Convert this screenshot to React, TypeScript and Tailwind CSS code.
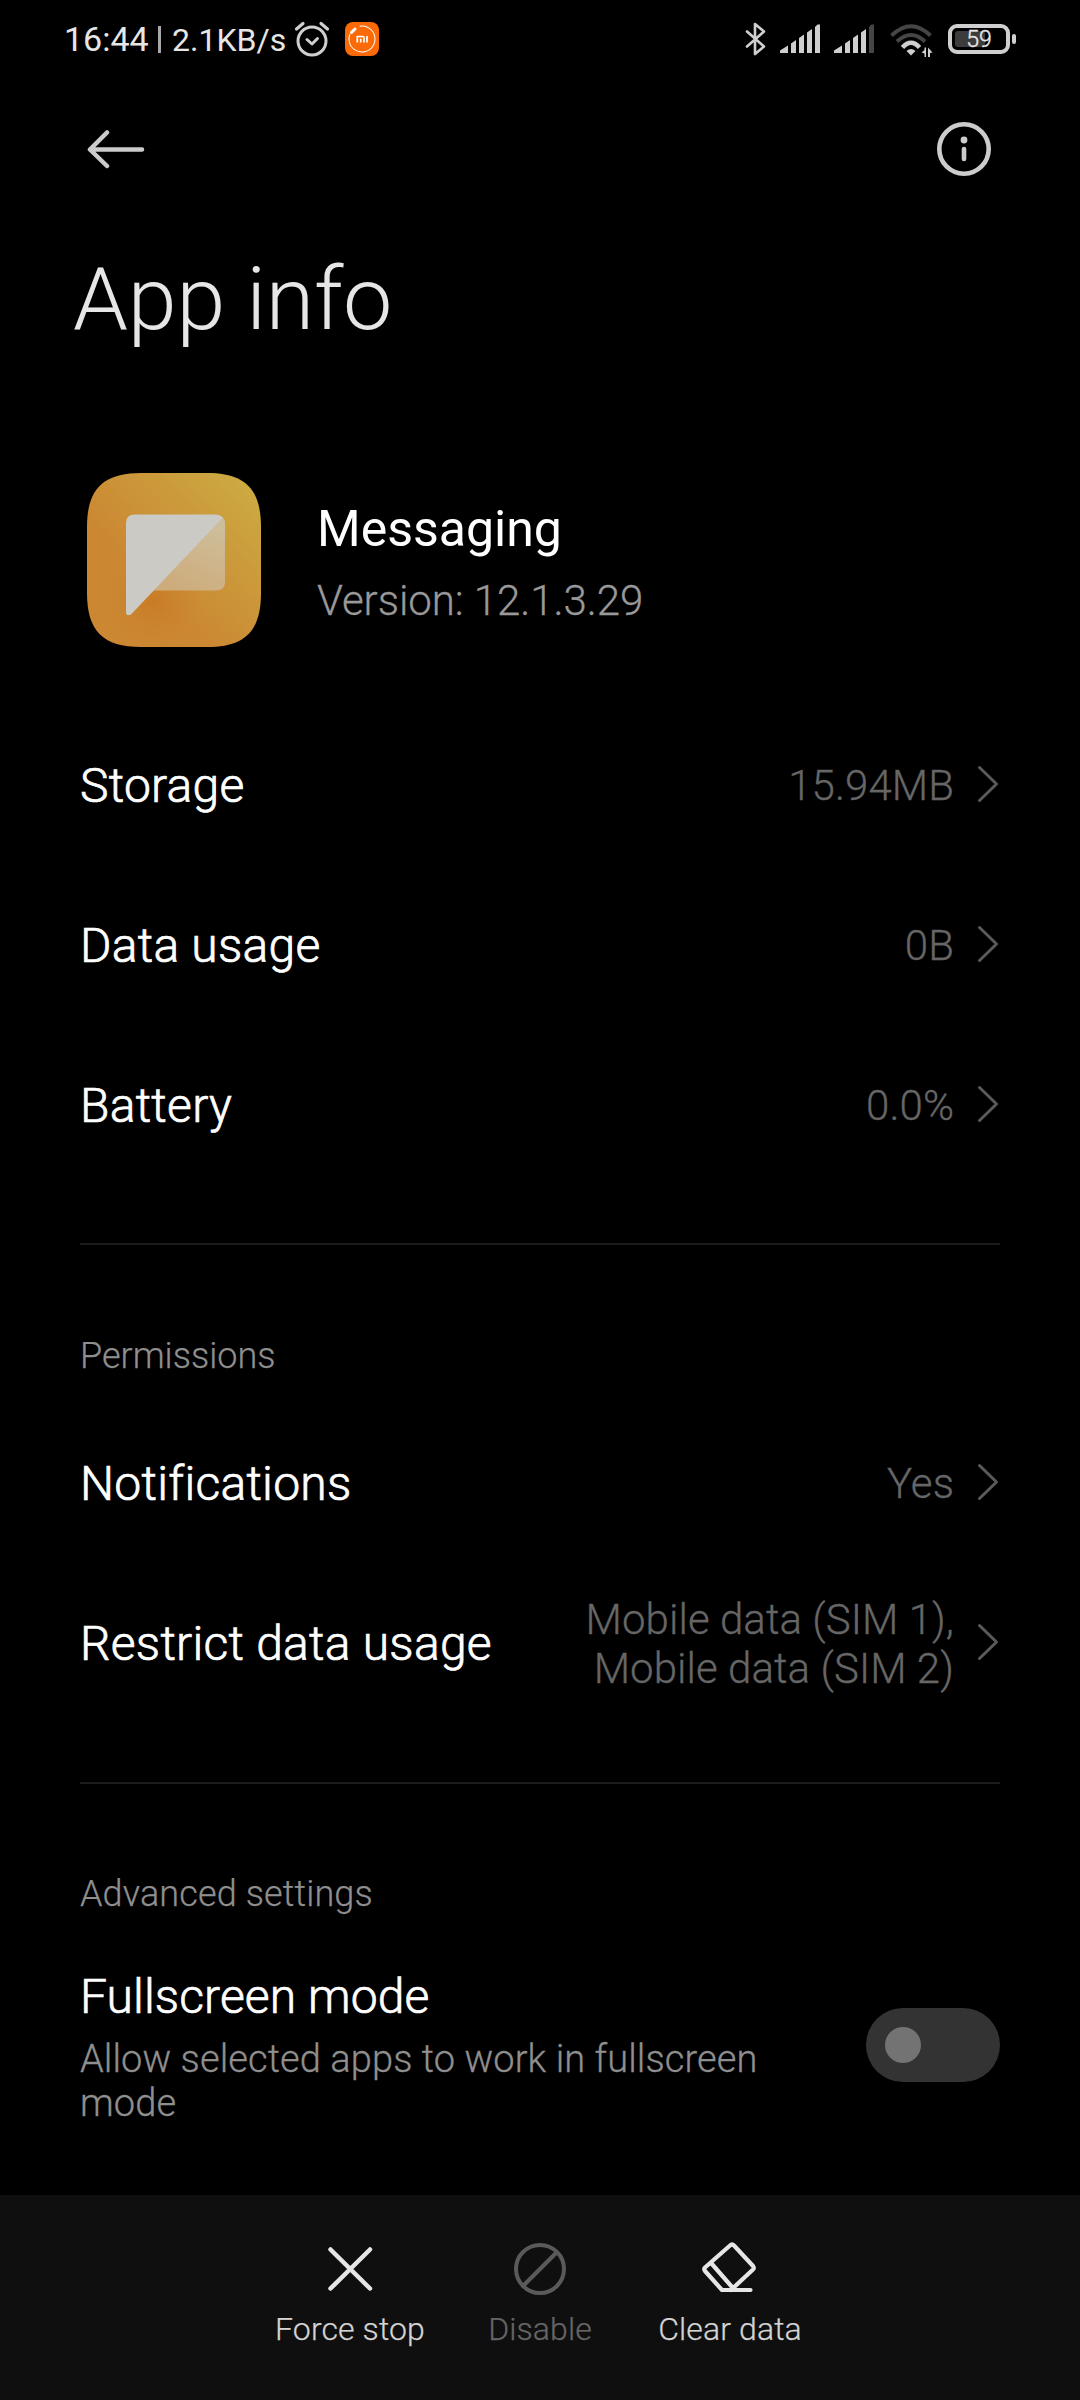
import type { ReactNode } from 'react'

interface RowProps {
  label: string
  value: ReactNode
}

function Chevron() {
  return (
    <svg width="24" height="40" viewBox="0 0 24 40" fill="none" className="shrink-0">
      <path d="M3.500 3.500 20.500 20 3.500 36.500" stroke="#5a5a5a" strokeWidth="3" strokeLinecap="round" strokeLinejoin="round" />
    </svg>
  )
}

// Light weight thickened by a hairline, halfway between Roboto Light and Regular
function Row({ label, value }: RowProps) {
  return (
    <div className="flex h-40 items-center">
      <span className="pt-[3px] text-[48px] font-light leading-none tracking-[0.25px] [-webkit-text-stroke:0.7px_currentColor]">{label}</span>
      <span className="ml-auto mr-[22px] pt-[3px] text-right text-[42px] font-light leading-[49px] tracking-[0.06px] text-[#666666] [-webkit-text-stroke:0.3px_currentColor]">{value}</span>
      <Chevron />
    </div>
  )
}

function AlarmIcon() {
  return (
    <svg width="36" height="36" viewBox="0 0 36 36" fill="none" stroke="#cfcfcf" strokeLinecap="round" strokeLinejoin="round">
      <circle cx="18" cy="20" r="14" strokeWidth="3" />
      <path d="M13 18.500 18 23 23.500 17.500" strokeWidth="3" />
      <path d="M2.500 8 9 2.500M33.500 8 27 2.500" strokeWidth="3.200" />
    </svg>
  )
}

function MiIcon() {
  return (
    <svg width="34" height="34" viewBox="0 0 34 34" fill="none">
      <rect width="34" height="34" rx="8" fill="#fb6a07" />
      <circle cx="17" cy="17" r="13" stroke="#fff" strokeWidth="1" strokeDasharray="68 13.700" transform="rotate(-100 17 17)" />
      <path d="M6.500 10.500 10 7" stroke="#fff" strokeWidth="3" strokeLinecap="round" />
      <path d="M12.300 20.500v-6h5.200q1.500 0 1.500 1.500v4.500M15.700 16.800v3.700M22 14v6.500" stroke="#fff" strokeWidth="1.700" />
    </svg>
  )
}

function BluetoothIcon() {
  return (
    <svg width="22" height="34" viewBox="0 0 22 34" fill="none">
      <path d="M2 9.500 19 24.500 10 32V2l9 7.500L2 24.500" stroke="#cfcfcf" strokeWidth="2.600" strokeLinecap="round" strokeLinejoin="round" />
    </svg>
  )
}

function SignalIcon({ weak = false }: { weak?: boolean }) {
  return (
    <svg width="40" height="30" viewBox="0 0 40 30" fill="#cfcfcf">
      <path d="M0 26.500 8 21.500V29H0ZM11 19.500 16 16v13h-5ZM19 14l5-3.500V29h-5ZM27 8.500 32 5v24h-5Z" />
      <path d="M35 3 37.500 0.500H40V29h-5Z" fill={weak ? '#454545' : '#cfcfcf'} />
    </svg>
  )
}

function WifiIcon() {
  return (
    <svg width="43" height="34" viewBox="0 0 43 34" fill="none">
      <path d="M1.500 11.500Q21 -7 40.500 11.500" stroke="#454545" strokeWidth="4" />
      <path d="M7 17.500Q21 4.500 35 17.500" stroke="#454545" strokeWidth="4" />
      <path d="M12.500 23.500Q21 14 29.500 23.500" stroke="#cfcfcf" strokeWidth="4.500" />
      <path d="M16.500 27Q21 23 25.500 27L21 31.500Z" fill="#cfcfcf" />
      <path d="M36 23.500V33H34.500V29.500L31.500 28.500 34.500 26V23.500ZM38 33V23.500L42.500 28.500 40 29V33Z" fill="#cfcfcf" />
    </svg>
  )
}

function Battery() {
  return (
    <div className="flex items-center gap-[2px]">
      <div className="relative flex h-[30px] w-[62px] items-center justify-center rounded-[9px] border-4 border-[#cfcfcf]">
        <div className="absolute left-[3px] top-[3px] h-4 w-[30px] rounded-[3px] bg-[#3c3c3c]" />
        <span className="relative pt-px text-[23px] font-light leading-none text-[#e6e6e6] [-webkit-text-stroke:0.4px_currentColor]">59</span>
      </div>
      <div className="h-[10px] w-1 rounded-full bg-[#cfcfcf]" />
    </div>
  )
}

function StatusBar() {
  return (
    <div className="flex h-[78px] items-center px-16">
      <span className="w-[85px] whitespace-nowrap text-[34px] leading-none text-[#e6e6e6]">16:44</span>
      <span className="ml-[9px] h-[27px] w-[3px] bg-[#a8a8a8]" />
      <span className="ml-[11px] w-[114px] whitespace-nowrap pt-px text-[32px] leading-none text-[#e6e6e6]">2.1KB/s</span>
      <div className="ml-[8px]"><AlarmIcon /></div>
      <div className="ml-[15px]"><MiIcon /></div>
      <div className="ml-auto flex items-center">
        <BluetoothIcon />
        <div className="ml-[13px]"><SignalIcon /></div>
        <div className="ml-[14px]"><SignalIcon weak /></div>
        <div className="ml-[16px] mt-1"><WifiIcon /></div>
        <div className="ml-[15px]"><Battery /></div>
      </div>
    </div>
  )
}

const TILE = 'M0 54C0 16 16 0 54 0H120C158 0 174 16 174 54V120C174 158 158 174 120 174H54C16 174 0 158 0 120Z'

function AppIcon() {
  return (
    <svg width="174" height="174" viewBox="0 0 174 174">
      <defs>
        <linearGradient id="tile" x1="0.350" y1="0.650" x2="0.950" y2="0.080">
          <stop offset="0" stopColor="#cb8732" />
          <stop offset="0.500" stopColor="#cb983a" />
          <stop offset="1" stopColor="#ccaa41" />
        </linearGradient>
        <radialGradient id="shade" cx="0.380" cy="0.740" r="0.280">
          <stop offset="0" stopColor="#c97b24" />
          <stop offset="1" stopColor="#cb8430" stopOpacity="0" />
        </radialGradient>
        <linearGradient id="fold" x1="0.800" y1="0" x2="0.300" y2="1">
          <stop offset="0" stopColor="#cdbf9c" />
          <stop offset="1" stopColor="#ceab7a" />
        </linearGradient>
      </defs>
      <path d={TILE} fill="url(#tile)" />
      <path d={TILE} fill="url(#shade)" />
      <path d="M66 117.500 135 44Q138 46 138 50V109Q138 117.500 129 117.500Z" fill="url(#fold)" />
      <path d="M39 50Q39 41.500 47.500 41.500H129Q133 41.500 136 44.500L44 141.500Q39 144 39 139Z" fill="#cccac5" />
    </svg>
  )
}

function Action({ label, icon, muted = false }: { label: string; icon: ReactNode; muted?: boolean }) {
  return (
    <div className="flex w-[190px] flex-col items-center">
      {icon}
      <span className={`mt-[11px] text-[32px] font-light leading-[38px] tracking-[0.1px] [-webkit-text-stroke:0.25px_currentColor] ${muted ? 'text-[#666666]' : 'text-[#d4d4d4]'}`}>{label}</span>
    </div>
  )
}

export default function App() {
  return (
    <div className="flex h-[2400px] w-[1080px] flex-col overflow-hidden bg-black font-['Roboto',sans-serif] text-white">
      <StatusBar />

      {/* Toolbar */}
      <div className="flex h-[142px] items-center justify-between pl-[86px] pr-[88px]">
        <svg width="60" height="40" viewBox="0 0 60 40" fill="none" stroke="#cccccc" strokeWidth="4.500" strokeLinecap="round" strokeLinejoin="round">
          <path d="M56 20.500H4M21 3.500 4 20.500 21 37" />
        </svg>
        <svg width="56" height="56" viewBox="0 0 56 56" fill="none">
          <circle cx="28" cy="28" r="24.700" stroke="#cccccc" strokeWidth="4.600" />
          <circle cx="28" cy="19" r="3.400" fill="#cccccc" />
          <path d="M28 28v10" stroke="#cccccc" strokeWidth="4.600" strokeLinecap="round" />
        </svg>
      </div>

      <h1 className="ml-[73px] mt-[27px] text-[88px] font-light leading-[104px] tracking-[-0.2px] text-[#e6e6e6]">App info</h1>

      {/* App summary */}
      <div className="mt-[122px] flex items-center pl-[87px]">
        <AppIcon />
        <div className="ml-14 pt-2">
          <div className="text-[50px] leading-[60px]">Messaging</div>
          <div className="mt-[14px] text-[42px] font-light leading-[56px] tracking-[-0.060px] text-[#999999] [-webkit-text-stroke:0.3px_currentColor]">Version: 12.1.3.29</div>
        </div>
      </div>

      <main className="flex flex-col px-20 pt-[57px]">
        <Row label="Storage" value="15.94MB" />
        <Row label="Data usage" value="0B" />
        <Row label="Battery" value="0.0%" />

        <hr className="mt-[59px] border-t-2 border-[#1c1c1c]" />
        <h2 className="mt-[90px] text-[36px] font-light leading-[42px] text-[#8f8f8f] [-webkit-text-stroke:0.25px_currentColor]">Permissions</h2>
        <div className="mt-[25px]">
          <Row label="Notifications" value="Yes" />
          <Row label="Restrict data usage" value={<>Mobile data (SIM 1),<br />Mobile data (SIM 2)</>} />
        </div>

        <hr className="mt-[60px] border-t-2 border-[#1c1c1c]" />
        <h2 className="mt-[89px] text-[36px] font-light leading-[42px] tracking-[0.12px] text-[#8f8f8f] [-webkit-text-stroke:0.25px_currentColor]">Advanced settings</h2>
        <div className="mt-[54px] flex items-center justify-between">
          <div className="w-[700px]">
            <div className="text-[48px] font-light leading-[56px] tracking-[0.1px] [-webkit-text-stroke:0.7px_currentColor]">Fullscreen mode</div>
            <div className="mt-3 text-[38px] font-light leading-[44px] tracking-[0.09px] text-[#8f8f8f] [-webkit-text-stroke:0.3px_currentColor]">Allow selected apps to work in fullscreen mode</div>
          </div>
          <div className="-mt-1 flex h-[74px] w-[134px] items-center rounded-full bg-[#333333] pl-[19px]">
            <div className="size-9 rounded-full bg-[#737373]" />
          </div>
        </div>
      </main>

      {/* Bottom actions */}
      <footer className="mt-auto flex h-[205px] shrink-0 justify-center bg-[#0f0f0f] pt-[44px]">
        <Action
          label="Force stop"
          icon={
            <svg width="60" height="60" viewBox="0 0 60 60" fill="none" stroke="#e6e6e6" strokeWidth="4.500" strokeLinecap="round">
              <path d="M10.500 10.500 50 49.500M50 10.500 10.500 49.500" />
            </svg>
          }
        />
        <Action
          label="Disable"
          muted
          icon={
            <svg width="60" height="60" viewBox="0 0 60 60" fill="none" stroke="#5a5a5a" strokeWidth="4">
              <circle cx="30" cy="30" r="24" />
              <path d="M13 47 47 13" />
            </svg>
          }
        />
        <Action
          label="Clear data"
          icon={
            <svg width="60" height="60" viewBox="0 0 60 60" fill="none" stroke="#e6e6e6" strokeWidth="4.200" strokeLinecap="round" strokeLinejoin="round">
              <path d="M31 51 53 30.500Q54.500 29 53 27L34 6.500Q32 4.500 30 6.500L5 28.500Q3.500 30 5 32L22 51H50.500M11.500 24.500 32 48" />
            </svg>
          }
        />
      </footer>
    </div>
  )
}
